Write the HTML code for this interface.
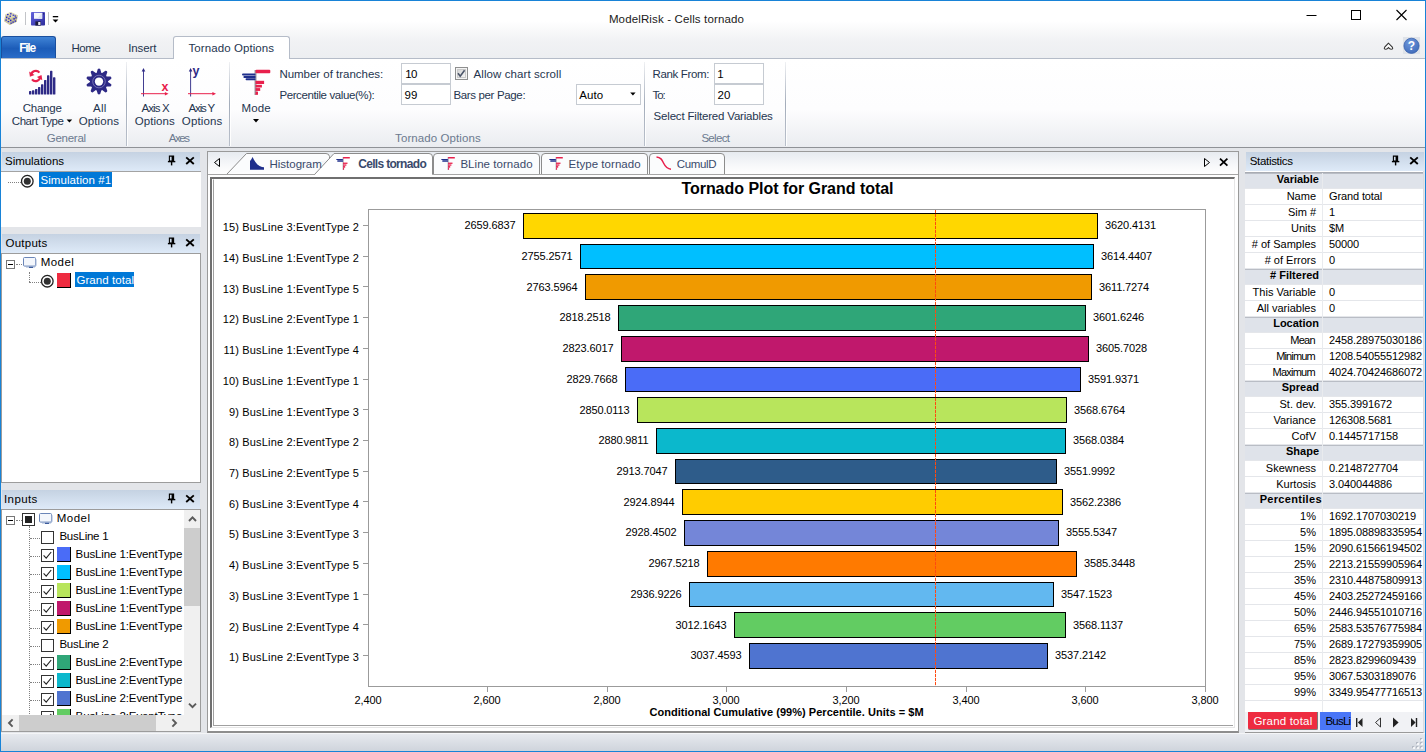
<!DOCTYPE html>
<html><head><meta charset="utf-8"><title>ModelRisk - Cells tornado</title>
<style>
*{box-sizing:border-box;margin:0;padding:0}
html,body{width:1426px;height:752px;overflow:hidden;background:#fff}
body{font-family:"Liberation Sans",sans-serif;font-size:12px;color:#25354f;position:relative}
.a{position:absolute}
.t{position:absolute;white-space:nowrap;line-height:14px}
.ui{font-size:12px;color:#25354f;letter-spacing:0px}
.c{text-align:center}
.gl{color:#6a7c96}
.ch{font-size:11px;color:#000;line-height:14px}
.dg{letter-spacing:-0.12px}
.lb{letter-spacing:0.17px}
.inp{position:absolute;background:#fff;border:1px solid #c6cbd2;height:21px}
.ph{position:absolute;height:19px;background:linear-gradient(#c5d2e2,#deeaf8);}
.ph .t{top:2px;left:5px;color:#000}
.pn{position:absolute;background:#fff;border:1px solid #9c9c9c}
.sel{background:#0078d7;color:#fff}
.cb{position:absolute;width:13px;height:13px;border:1px solid #333;background:#fff}
.sw{position:absolute;width:13px;height:15px;border-right:1px solid #000;border-bottom:1px solid #000}
.dot{position:absolute;border-top:1px dotted #808080;height:0}
.vdot{position:absolute;border-left:1px dotted #808080;width:0}
.st{position:absolute;font-size:11px;color:#000;white-space:nowrap;line-height:14px}
</style></head>
<body>
<div class="a" style="left:0;top:0;width:1426px;height:752px;background:#fff"></div>
<div class="a" style="left:1px;top:1px;width:1424px;height:58px;background:linear-gradient(#ffffff 0,#ffffff 20px,#f1f2f4 40px,#eceef1 58px)"></div>
<div class="a" style="left:1px;top:58px;width:1424px;height:90px;background:linear-gradient(#ffffff 0,#fdfdfe 50px,#eaecf0 89px);border-top:1px solid #b5bcc8;border-bottom:1px solid #8f9297"></div>
<div class="a" style="left:1px;top:148px;width:1424px;height:585px;background:#e3e5e9"></div>
<div class="a" style="left:1px;top:733px;width:1424px;height:18px;background:linear-gradient(#e6e9ee,#cfd4dc);border-top:1px solid #f4f5f7"></div>
<div class="a" style="left:0;top:0;width:1426px;height:752px;border:1px solid #1883d7;pointer-events:none;z-index:50"></div>
<div class="t" style="left:608.90px;top:12px;font-size:11.5px;letter-spacing:0.139px;color:#1a1a1a">ModelRisk - Cells tornado</div>
<svg class="a" style="left:0px;top:8px" width="64" height="22" viewBox="0 8 64 22">
<defs><linearGradient id="fl" x1="0" y1="0" x2="1" y2="1"><stop offset="0" stop-color="#6464dc"/><stop offset="0.6" stop-color="#4040b8"/><stop offset="1" stop-color="#2c2c98"/></linearGradient></defs>
<path d="M10.5 12 L17.6 15.2 L16.8 21.8 L9.6 25 L4 21.2 L5.4 14.6 Z" fill="#cfcaa2"/>
<path d="M10.5 12 L17.6 15.2 L12 18 L5.4 14.6 Z" fill="#dedab6"/>
<path d="M12 18 L17.6 15.2 L16.8 21.8 L9.6 25 Z" fill="#c2bd94"/>
<g fill="#2626c8"><rect x="7" y="14" width="1.6" height="1.2"/><rect x="10" y="13.2" width="1.6" height="1.2"/><rect x="12.6" y="14.6" width="1.6" height="1.2"/><rect x="9.4" y="15.6" width="1.6" height="1.2"/><rect x="14.6" y="15.4" width="1.4" height="1.2"/>
<rect x="6" y="16.6" width="1.4" height="1.6"/><rect x="8.2" y="17.8" width="1.4" height="1.6"/><rect x="5.4" y="19.4" width="1.4" height="1.4"/><rect x="10" y="19.6" width="1.4" height="1.6"/><rect x="7.6" y="21" width="1.6" height="1.2"/>
<rect x="13.4" y="18" width="1.4" height="1.6"/><rect x="15.4" y="17" width="1.2" height="1.6"/><rect x="14.6" y="20.4" width="1.4" height="1.4"/><rect x="12.4" y="21.4" width="1.4" height="1.4"/><rect x="10.4" y="22.6" width="1.4" height="1.2"/></g>
<rect x="25" y="12" width="1" height="13" fill="#c2c4c8"/>
<rect x="31" y="12" width="14" height="13.6" rx="0.8" fill="url(#fl)"/><rect x="34" y="12.8" width="8.2" height="6" fill="#f4f6fc"/><path d="M42.2 12.8 v6 h-5z" fill="#dfe4f4"/><rect x="35.4" y="21.4" width="5.4" height="4.2" fill="#1c1c3a"/><rect x="38.2" y="22" width="2.2" height="3" fill="#e8e8f4"/><rect x="43.2" y="13" width="0.9" height="1.6" fill="#22226a"/>
<rect x="48" y="12" width="1" height="13" fill="#c2c4c8"/>
<rect x="52.8" y="16" width="5.4" height="1.3" fill="#000"/><path d="M52.6 19.5 h5.8 l-2.9 3z" fill="#000"/>
</svg>
<svg class="a" style="left:1290px;top:2px" width="136" height="28" viewBox="0 0 136 28">
<path d="M16.5 13.5 h10" stroke="#000" stroke-width="1"/>
<rect x="61.5" y="8.5" width="9" height="9" fill="none" stroke="#000" stroke-width="1"/>
<path d="M106.5 8 l10 10 M116.5 8 l-10 10" stroke="#000" stroke-width="1.1"/>
</svg>
<svg class="a" style="left:1380px;top:36px" width="44" height="20" viewBox="0 0 44 20">
<path d="M8.5 7.2 l-3.8 4 q-1.2 2 1.2 2 q1.4 0 2.6-1.5 q1.2 1.5 2.6 1.5 q2.4 0 1.2-2z" fill="#fff" stroke="#333" stroke-width="1.1"/>
<rect x="23" y="1" width="17" height="17" fill="#dfe3e9"/>
<defs><radialGradient id="hg" cx="0.4" cy="0.3" r="0.8"><stop offset="0" stop-color="#6f98dc"/><stop offset="1" stop-color="#3c68b8"/></radialGradient></defs><circle cx="31.5" cy="9.8" r="7.6" fill="url(#hg)" stroke="#3a62ac" stroke-width="0.8"/>
<text x="31.5" y="14" font-family="Liberation Sans" font-weight="bold" font-size="12" fill="#fff" text-anchor="middle">?</text>
</svg>
<div class="a" style="left:1px;top:36px;width:55px;height:22px;border-radius:3px 3px 0 0;background:linear-gradient(#3f83d6,#1c5cb8 55%,#2a6cc8);border:1px solid #1a4f9e;border-bottom:none"></div>
<div class="t" style="left:19.20px;top:41px;font-size:12px;font-weight:bold;letter-spacing:-1.266px;color:#fff">File</div>
<div class="t" style="left:71.40px;top:41px;font-size:11.5px;letter-spacing:-0.460px;color:#25354f">Home</div>
<div class="t" style="left:128.20px;top:41px;font-size:11.5px;letter-spacing:-0.113px;color:#25354f">Insert</div>
<div class="a" style="left:173px;top:36px;width:117px;height:23px;border-radius:3px 3px 0 0;background:#fff;border:1px solid #b5bcc8;border-bottom:none"></div>
<div class="t" style="left:188.50px;top:41px;font-size:11.5px;letter-spacing:0.083px;color:#25354f">Tornado Options</div>
<div class="a" style="left:126px;top:62px;width:1px;height:84px;background:linear-gradient(rgba(150,160,176,0.15),#a3acba 50%,rgba(150,160,176,0.6))"></div>
<div class="a" style="left:127px;top:62px;width:1px;height:84px;background:rgba(255,255,255,0.9)"></div>
<div class="a" style="left:229px;top:62px;width:1px;height:84px;background:linear-gradient(rgba(150,160,176,0.15),#a3acba 50%,rgba(150,160,176,0.6))"></div>
<div class="a" style="left:230px;top:62px;width:1px;height:84px;background:rgba(255,255,255,0.9)"></div>
<div class="a" style="left:644px;top:62px;width:1px;height:84px;background:linear-gradient(rgba(150,160,176,0.15),#a3acba 50%,rgba(150,160,176,0.6))"></div>
<div class="a" style="left:645px;top:62px;width:1px;height:84px;background:rgba(255,255,255,0.9)"></div>
<div class="a" style="left:785px;top:62px;width:1px;height:84px;background:linear-gradient(rgba(150,160,176,0.15),#a3acba 50%,rgba(150,160,176,0.6))"></div>
<div class="a" style="left:786px;top:62px;width:1px;height:84px;background:rgba(255,255,255,0.9)"></div>
<svg class="a" style="left:0;top:58px" width="300" height="90" viewBox="0 58 300 90"><rect x="29" y="91.1" width="2.4" height="3.4" rx="0.6" fill="#2e2a86"/><rect x="32" y="90.3" width="2.4" height="4.2" rx="0.6" fill="#2e2a86"/><rect x="35" y="89" width="2.4" height="5.5" rx="0.6" fill="#2e2a86"/><rect x="38" y="87.1" width="2.4" height="7.4" rx="0.6" fill="#2e2a86"/><rect x="41" y="84.2" width="2.4" height="10.3" rx="0.6" fill="#2e2a86"/><rect x="44" y="80" width="2.4" height="14.5" rx="0.6" fill="#2e2a86"/><rect x="47" y="75.3" width="2.4" height="19.2" rx="0.6" fill="#2e2a86"/><rect x="50" y="70.8" width="2.4" height="23.7" rx="0.6" fill="#2e2a86"/><rect x="53" y="77.3" width="2.4" height="17.2" rx="0.6" fill="#2e2a86"/><path d="M31.2 75.2 a4.6 4.6 0 0 1 8.2 -2.6" stroke="#e8204c" stroke-width="2.2" fill="none"/><path d="M29.2 71.6 l0.7 5.2 l4.6 -1.9z" fill="#e8204c"/><path d="M40.2 76.6 a4.6 4.6 0 0 1 -8.2 2.8" stroke="#e8204c" stroke-width="2.2" fill="none"/><path d="M42.3 80.2 l-0.8 -5.2 l-4.6 2z" fill="#e8204c"/><path d="M96.60 72.88 L97.80 69.01 Q99.00 68.05 100.20 69.01 L101.40 72.88 L102.16 73.12 L105.41 70.70 Q106.94 70.63 107.34 72.10 L106.04 75.94 L106.51 76.59 L110.56 76.54 Q111.84 77.38 111.30 78.81 L107.99 81.15 L107.99 81.95 L111.30 84.29 Q111.84 85.72 110.56 86.56 L106.51 86.51 L106.04 87.16 L107.34 91.00 Q106.94 92.47 105.41 92.40 L102.16 89.98 L101.40 90.22 L100.20 94.09 Q99.00 95.05 97.80 94.09 L96.60 90.22 L95.84 89.98 L92.59 92.40 Q91.06 92.47 90.66 91.00 L91.96 87.16 L91.49 86.51 L87.44 86.56 Q86.16 85.72 86.70 84.29 L90.01 81.95 L90.01 81.15 L86.70 78.81 Q86.16 77.38 87.44 76.54 L91.49 76.59 L91.96 75.94 L90.66 72.10 Q91.06 70.63 92.59 70.70 L95.84 73.12 Z" fill="#2e2a86"/><circle cx="99.0" cy="81.55" r="9.0" fill="#2e2a86"/><circle cx="99.0" cy="81.55" r="4.15" fill="#fff"/><circle cx="99.0" cy="81.55" r="6.3" fill="none" stroke="#a9a6d6" stroke-width="0.55"/><path d="M143.5 96.5 V70" stroke="#2e2a86" stroke-width="1" opacity="0.9"/><path d="M143.5 68 l-1.8 3.4 h3.6z" fill="#2e2a86"/><path d="M141 93.7 H166" stroke="#e8204c" stroke-width="1"/><path d="M168.5 93.7 l-3.6 -1.8 v3.6z" fill="#e8204c"/><text x="161.6" y="91" font-family="Liberation Sans" font-weight="bold" font-size="12.5" fill="#e8204c">x</text><path d="M190.6 96.5 V70" stroke="#2e2a86" stroke-width="1" opacity="0.9"/><path d="M190.6 68 l-1.8 3.4 h3.6z" fill="#2e2a86"/><path d="M188 93.7 H213.5" stroke="#e8204c" stroke-width="1"/><path d="M216 93.7 l-3.6 -1.8 v3.6z" fill="#e8204c"/><text x="192.6" y="75.3" font-family="Liberation Sans" font-weight="bold" font-size="12.5" fill="#2e2a86">y</text><rect x="254.5" y="70" width="2" height="25" fill="#4a4a58" opacity="0.55"/><rect x="255.5" y="69.8" width="14.8" height="3.4" rx="1" fill="#e8204c"/><rect x="242" y="73.4" width="13.5" height="2.2" rx="1" fill="#1f2f8c"/><rect x="243.6" y="75.9" width="11.9" height="2.1" fill="#1f2f8c"/><rect x="245.6" y="78.2" width="9.9" height="2" rx="0.8" fill="#1f2f8c"/><rect x="255.5" y="80.8" width="8.6" height="3.2" fill="#e8204c"/><rect x="255.5" y="84.8" width="6.4" height="2.7" fill="#e8204c"/><rect x="255.5" y="88.1" width="4.7" height="2.8" fill="#e8204c"/><rect x="255.5" y="91.6" width="2.5" height="3.2" fill="#e8204c"/><path d="M253 119 h6 l-3 3.4z" fill="#000"/><path d="M66.6 119.4 h5.6 l-2.8 3.2z" fill="#000"/></svg>
<div class="t" style="left:22.70px;top:101px;font-size:11.5px;letter-spacing:-0.238px;color:#25354f">Change</div>
<div class="t" style="left:11.80px;top:114px;font-size:11.5px;letter-spacing:-0.450px;color:#25354f">Chart Type</div>
<div class="t" style="left:93.10px;top:101px;font-size:11.5px;letter-spacing:0.187px;color:#25354f">All</div>
<div class="t" style="left:78.80px;top:114px;font-size:11.5px;letter-spacing:0.086px;color:#25354f">Options</div>
<div class="t" style="left:141.40px;top:101px;font-size:11.5px;letter-spacing:-0.864px;color:#25354f">Axis X</div>
<div class="t" style="left:134.70px;top:114px;font-size:11.5px;letter-spacing:0.086px;color:#25354f">Options</div>
<div class="t" style="left:188.50px;top:101px;font-size:11.5px;letter-spacing:-1.124px;color:#25354f">Axis Y</div>
<div class="t" style="left:181.80px;top:114px;font-size:11.5px;letter-spacing:0.136px;color:#25354f">Options</div>
<div class="t" style="left:241.60px;top:101px;font-size:11.5px;letter-spacing:0.110px;color:#25354f">Mode</div>
<div class="t" style="left:46.80px;top:131px;font-size:11.5px;letter-spacing:-0.276px;color:#6c7a8f">General</div>
<div class="t" style="left:168.80px;top:131px;font-size:11.5px;letter-spacing:-1.472px;color:#6c7a8f">Axes</div>
<div class="t" style="left:395.10px;top:131px;font-size:11.5px;letter-spacing:0.090px;color:#6c7a8f">Tornado Options</div>
<div class="t" style="left:701.40px;top:131px;font-size:11.5px;letter-spacing:-0.693px;color:#6c7a8f">Select</div>
<div class="t" style="left:279.40px;top:67px;font-size:11.5px;letter-spacing:-0.022px;color:#25354f">Number of tranches:</div>
<div class="t" style="left:279.40px;top:88px;font-size:11.5px;letter-spacing:-0.395px;color:#25354f">Percentile value(%):</div>
<div class="inp" style="left:401px;top:63px;width:50px"></div>
<div class="t" style="left:405.20px;top:67px;font-size:11.5px;letter-spacing:-0.596px;color:#000">10</div>
<div class="inp" style="left:401px;top:84px;width:50px"></div>
<div class="t" style="left:404.60px;top:88px;font-size:11.5px;letter-spacing:0.004px;color:#000">99</div>
<div class="a" style="left:455px;top:67px;width:13px;height:13px;border:1px solid #8e8f8f;background:#f4f4f4"></div><div class="a" style="left:457px;top:69px;width:9px;height:9px;border:1px solid #c9c9c9;background:linear-gradient(135deg,#d6d6d6,#f4f4f4)"></div>
<svg class="a" style="left:455px;top:67px" width="13" height="13" viewBox="0 0 13 13"><path d="M3 6.2 l2.2 3 l4.4 -6" stroke="#4a5468" stroke-width="1.6" fill="none"/></svg>
<div class="t" style="left:473.60px;top:67px;font-size:11.5px;letter-spacing:0.081px;color:#25354f">Allow chart scroll</div>
<div class="t" style="left:453.40px;top:88px;font-size:11.5px;letter-spacing:-0.347px;color:#25354f">Bars per Page:</div>
<div class="inp" style="left:576px;top:84px;width:65px"></div>
<div class="t" style="left:579.30px;top:88px;font-size:11.5px;letter-spacing:0.080px;color:#000">Auto</div>
<svg class="a" style="left:629px;top:91px" width="8" height="6" viewBox="0 0 8 6"><path d="M1.2 1.4 h5.4 l-2.7 3.2z" fill="#000"/></svg>
<div class="t" style="left:652.60px;top:67px;font-size:11.5px;letter-spacing:-0.363px;color:#25354f">Rank From:</div>
<div class="t" style="left:652.60px;top:88px;font-size:11.5px;letter-spacing:-1.173px;color:#25354f">To:</div>
<div class="inp" style="left:714px;top:63px;width:50px"></div>
<div class="t" style="left:717.2px;top:67px;color:#000;font-size:11.5px">1</div>
<div class="inp" style="left:714px;top:84px;width:50px"></div>
<div class="t" style="left:717.60px;top:88px;font-size:11.5px;letter-spacing:0.004px;color:#000">20</div>
<div class="t" style="left:653.60px;top:109px;font-size:11.5px;letter-spacing:-0.189px;color:#25354f">Select Filtered Variables</div>
<div class="ph" style="left:2px;top:152px;width:198px"></div>
<div class="t" style="left:5.05px;top:154px;font-size:11.5px;letter-spacing:-0.044px;color:#000">Simulations</div>
<svg class="a" style="left:167px;top:155px" width="10" height="12" viewBox="0 0 10 12"><path d="M2.4 1.1 h4.2 v5 h-4.2z" fill="none" stroke="#000" stroke-width="1.1"/><rect x="4.6" y="1" width="2.4" height="5.2" fill="#000"/><rect x="0.9" y="5.9" width="7.4" height="1.4" fill="#000"/><rect x="3.9" y="7" width="1.4" height="3.4" fill="#000"/></svg>
<svg class="a" style="left:185px;top:156px" width="10" height="10" viewBox="0 0 10 10"><path d="M1.2 1.4 l7.6 6.6 M8.8 1.4 l-7.6 6.6" stroke="#000" stroke-width="1.9" fill="none"/></svg>
<div class="a" style="left:1px;top:171px;width:200px;height:56px;background:#fff;border-top:1px solid #a3a3a3"></div>
<div class="dot" style="left:8px;top:182px;width:13px"></div>
<svg class="a" style="left:20px;top:174px" width="14" height="14" viewBox="0 0 14 14"><circle cx="7.3" cy="7.2" r="5.8" fill="#fff" stroke="#222" stroke-width="1.3"/><circle cx="7.3" cy="7.2" r="3.5" fill="#303030"/></svg>
<div class="a" style="left:39px;top:172px;width:73px;height:15px;background:#0078d7"></div>
<div class="t" style="left:40.40px;top:173px;font-size:11.5px;letter-spacing:0.093px;color:#fff">Simulation #1</div>
<div class="ph" style="left:2px;top:234px;width:198px"></div>
<div class="t" style="left:5.50px;top:236px;font-size:11.5px;letter-spacing:0.246px;color:#000">Outputs</div>
<svg class="a" style="left:167px;top:237px" width="10" height="12" viewBox="0 0 10 12"><path d="M2.4 1.1 h4.2 v5 h-4.2z" fill="none" stroke="#000" stroke-width="1.1"/><rect x="4.6" y="1" width="2.4" height="5.2" fill="#000"/><rect x="0.9" y="5.9" width="7.4" height="1.4" fill="#000"/><rect x="3.9" y="7" width="1.4" height="3.4" fill="#000"/></svg>
<svg class="a" style="left:185px;top:238px" width="10" height="10" viewBox="0 0 10 10"><path d="M1.2 1.4 l7.6 6.6 M8.8 1.4 l-7.6 6.6" stroke="#000" stroke-width="1.9" fill="none"/></svg>
<div class="pn" style="left:1px;top:253px;width:200px;height:230px"></div>
<svg class="a" style="left:6px;top:260px" width="9" height="9" viewBox="0 0 9 9"><rect x="0.5" y="0.5" width="8" height="8" fill="#fff" stroke="#777" stroke-width="1"/><path d="M2 4.5 h5" stroke="#000" stroke-width="1"/></svg>
<div class="dot" style="left:16px;top:264px;width:6px"></div>
<svg class="a" style="left:23px;top:257px" width="14" height="11" viewBox="0 0 14 11"><rect x="0.5" y="0.5" width="12" height="8.6" rx="1" fill="#f4f7fc" stroke="#6b86b8" stroke-width="1"/><path d="M3 9.8 h8.5 l1.4 -1.6 v-6" stroke="#9fb2d4" stroke-width="1.2" fill="none"/><path d="M6 10.4 h4" stroke="#3c5c9c" stroke-width="1.2"/></svg>
<div class="t" style="left:40.80px;top:255px;font-size:11.5px;letter-spacing:0.408px;color:#000">Model</div>
<div class="vdot" style="left:29px;top:272px;height:10px"></div>
<div class="dot" style="left:29px;top:282px;width:12px"></div>
<svg class="a" style="left:40px;top:274px" width="14" height="14" viewBox="0 0 14 14"><circle cx="7.3" cy="7.2" r="5.8" fill="#fff" stroke="#222" stroke-width="1.3"/><circle cx="7.3" cy="7.2" r="3.5" fill="#303030"/></svg>
<div class="a" style="left:57px;top:273px;width:14px;height:15px;background:#ee2b40;border-right:1px solid #000;border-bottom:1px solid #000"></div>
<div class="a" style="left:75px;top:272px;width:59px;height:15px;background:#0078d7"></div>
<div class="t" style="left:76.40px;top:273px;font-size:11.5px;letter-spacing:0.066px;color:#fff">Grand total</div>
<div class="ph" style="left:2px;top:490px;width:198px"></div>
<div class="t" style="left:4.05px;top:492px;font-size:11.5px;letter-spacing:0.375px;color:#000">Inputs</div>
<svg class="a" style="left:167px;top:493px" width="10" height="12" viewBox="0 0 10 12"><path d="M2.4 1.1 h4.2 v5 h-4.2z" fill="none" stroke="#000" stroke-width="1.1"/><rect x="4.6" y="1" width="2.4" height="5.2" fill="#000"/><rect x="0.9" y="5.9" width="7.4" height="1.4" fill="#000"/><rect x="3.9" y="7" width="1.4" height="3.4" fill="#000"/></svg>
<svg class="a" style="left:185px;top:494px" width="10" height="10" viewBox="0 0 10 10"><path d="M1.2 1.4 l7.6 6.6 M8.8 1.4 l-7.6 6.6" stroke="#000" stroke-width="1.9" fill="none"/></svg>
<div class="pn" style="left:1px;top:509px;width:200px;height:223px"></div>
<div class="a" style="left:2px;top:510px;width:182px;height:205px;overflow:hidden">
<svg class="a" style="left:4px;top:6px" width="9" height="9" viewBox="0 0 9 9"><rect x="0.5" y="0.5" width="8" height="8" fill="#fff" stroke="#777" stroke-width="1"/><path d="M2 4.5 h5" stroke="#000" stroke-width="1"/></svg>
<div class="dot" style="left:14px;top:10px;width:6px"></div>
<div class="a" style="left:20px;top:3px;width:13px;height:13px;border:1px solid #333;background:#fff"></div><div class="a" style="left:23px;top:6px;width:7px;height:7px;background:#222"></div>
<svg class="a" style="left:37px;top:3px" width="14" height="11" viewBox="0 0 14 11"><rect x="0.5" y="0.5" width="12" height="8.6" rx="1" fill="#f4f7fc" stroke="#6b86b8" stroke-width="1"/><path d="M3 9.8 h8.5 l1.4 -1.6 v-6" stroke="#9fb2d4" stroke-width="1.2" fill="none"/><path d="M6 10.4 h4" stroke="#3c5c9c" stroke-width="1.2"/></svg>
<div class="t" style="left:54.70px;top:1px;font-size:11.5px;letter-spacing:0.483px;color:#000">Model</div>
<div class="vdot" style="left:27px;top:16px;height:200px"></div>
<div class="dot" style="left:28px;top:28px;width:10px"></div>
<div class="a" style="left:39px;top:21px;width:13px;height:13px;border:1px solid #333;background:#fff"></div>
<div class="t" style="left:57.40px;top:19px;font-size:11.5px;letter-spacing:-0.244px;color:#000">BusLine 1</div>
<div class="dot" style="left:28px;top:46px;width:10px"></div>
<div class="a" style="left:39px;top:39px;width:13px;height:13px;border:1px solid #333;background:#fff"><svg class="a" style="left:0;top:0" width="11" height="11" viewBox="0 0 11 11"><path d="M1.6 5.4 l2.6 2.8 l5 -6.2" stroke="#222" stroke-width="1.1" fill="none"/></svg></div>
<div class="a" style="left:55px;top:37px;width:14px;height:15px;background:#4a6cf7;border-right:1px solid #000;border-bottom:1px solid #000"></div>
<div class="t" style="left:73.60px;top:37px;font-size:11.5px;letter-spacing:-0.110px;color:#000">BusLine 1:EventType</div>
<div class="dot" style="left:28px;top:64px;width:10px"></div>
<div class="a" style="left:39px;top:57px;width:13px;height:13px;border:1px solid #333;background:#fff"><svg class="a" style="left:0;top:0" width="11" height="11" viewBox="0 0 11 11"><path d="M1.6 5.4 l2.6 2.8 l5 -6.2" stroke="#222" stroke-width="1.1" fill="none"/></svg></div>
<div class="a" style="left:55px;top:55px;width:14px;height:15px;background:#00bfff;border-right:1px solid #000;border-bottom:1px solid #000"></div>
<div class="t" style="left:73.60px;top:55px;font-size:11.5px;letter-spacing:-0.110px;color:#000">BusLine 1:EventType</div>
<div class="dot" style="left:28px;top:82px;width:10px"></div>
<div class="a" style="left:39px;top:75px;width:13px;height:13px;border:1px solid #333;background:#fff"><svg class="a" style="left:0;top:0" width="11" height="11" viewBox="0 0 11 11"><path d="M1.6 5.4 l2.6 2.8 l5 -6.2" stroke="#222" stroke-width="1.1" fill="none"/></svg></div>
<div class="a" style="left:55px;top:73px;width:14px;height:15px;background:#b8e55c;border-right:1px solid #000;border-bottom:1px solid #000"></div>
<div class="t" style="left:73.60px;top:73px;font-size:11.5px;letter-spacing:-0.110px;color:#000">BusLine 1:EventType</div>
<div class="dot" style="left:28px;top:100px;width:10px"></div>
<div class="a" style="left:39px;top:93px;width:13px;height:13px;border:1px solid #333;background:#fff"><svg class="a" style="left:0;top:0" width="11" height="11" viewBox="0 0 11 11"><path d="M1.6 5.4 l2.6 2.8 l5 -6.2" stroke="#222" stroke-width="1.1" fill="none"/></svg></div>
<div class="a" style="left:55px;top:91px;width:14px;height:15px;background:#c0186c;border-right:1px solid #000;border-bottom:1px solid #000"></div>
<div class="t" style="left:73.60px;top:91px;font-size:11.5px;letter-spacing:-0.110px;color:#000">BusLine 1:EventType</div>
<div class="dot" style="left:28px;top:118px;width:10px"></div>
<div class="a" style="left:39px;top:111px;width:13px;height:13px;border:1px solid #333;background:#fff"><svg class="a" style="left:0;top:0" width="11" height="11" viewBox="0 0 11 11"><path d="M1.6 5.4 l2.6 2.8 l5 -6.2" stroke="#222" stroke-width="1.1" fill="none"/></svg></div>
<div class="a" style="left:55px;top:109px;width:14px;height:15px;background:#f09a00;border-right:1px solid #000;border-bottom:1px solid #000"></div>
<div class="t" style="left:73.60px;top:109px;font-size:11.5px;letter-spacing:-0.110px;color:#000">BusLine 1:EventType</div>
<div class="dot" style="left:28px;top:136px;width:10px"></div>
<div class="a" style="left:39px;top:129px;width:13px;height:13px;border:1px solid #333;background:#fff"></div>
<div class="t" style="left:57.40px;top:127px;font-size:11.5px;letter-spacing:-0.244px;color:#000">BusLine 2</div>
<div class="dot" style="left:28px;top:154px;width:10px"></div>
<div class="a" style="left:39px;top:147px;width:13px;height:13px;border:1px solid #333;background:#fff"><svg class="a" style="left:0;top:0" width="11" height="11" viewBox="0 0 11 11"><path d="M1.6 5.4 l2.6 2.8 l5 -6.2" stroke="#222" stroke-width="1.1" fill="none"/></svg></div>
<div class="a" style="left:55px;top:145px;width:14px;height:15px;background:#2fa678;border-right:1px solid #000;border-bottom:1px solid #000"></div>
<div class="t" style="left:73.60px;top:145px;font-size:11.5px;letter-spacing:-0.110px;color:#000">BusLine 2:EventType</div>
<div class="dot" style="left:28px;top:172px;width:10px"></div>
<div class="a" style="left:39px;top:165px;width:13px;height:13px;border:1px solid #333;background:#fff"><svg class="a" style="left:0;top:0" width="11" height="11" viewBox="0 0 11 11"><path d="M1.6 5.4 l2.6 2.8 l5 -6.2" stroke="#222" stroke-width="1.1" fill="none"/></svg></div>
<div class="a" style="left:55px;top:163px;width:14px;height:15px;background:#0bb8cc;border-right:1px solid #000;border-bottom:1px solid #000"></div>
<div class="t" style="left:73.60px;top:163px;font-size:11.5px;letter-spacing:-0.110px;color:#000">BusLine 2:EventType</div>
<div class="dot" style="left:28px;top:190px;width:10px"></div>
<div class="a" style="left:39px;top:183px;width:13px;height:13px;border:1px solid #333;background:#fff"><svg class="a" style="left:0;top:0" width="11" height="11" viewBox="0 0 11 11"><path d="M1.6 5.4 l2.6 2.8 l5 -6.2" stroke="#222" stroke-width="1.1" fill="none"/></svg></div>
<div class="a" style="left:55px;top:181px;width:14px;height:15px;background:#4f74d0;border-right:1px solid #000;border-bottom:1px solid #000"></div>
<div class="t" style="left:73.60px;top:181px;font-size:11.5px;letter-spacing:-0.110px;color:#000">BusLine 2:EventType</div>
<div class="dot" style="left:28px;top:208px;width:10px"></div>
<div class="a" style="left:39px;top:201px;width:13px;height:13px;border:1px solid #333;background:#fff"><svg class="a" style="left:0;top:0" width="11" height="11" viewBox="0 0 11 11"><path d="M1.6 5.4 l2.6 2.8 l5 -6.2" stroke="#222" stroke-width="1.1" fill="none"/></svg></div>
<div class="a" style="left:55px;top:199px;width:14px;height:15px;background:#62cc62;border-right:1px solid #000;border-bottom:1px solid #000"></div>
<div class="t" style="left:73.60px;top:199px;font-size:11.5px;letter-spacing:-0.110px;color:#000">BusLine 2:EventType</div>
</div>
<div class="a" style="left:184px;top:510px;width:16px;height:205px;background:#f0f0f0"></div>
<div class="a" style="left:184px;top:528px;width:16px;height:78px;background:#cdcdcd"></div>
<svg class="a" style="left:184.5px;top:510px" width="15" height="205" viewBox="0 0 15 205"><path d="M4 11 l3.5 -3.6 l3.5 3.6" stroke="#5a5a5a" stroke-width="1.9" fill="none"/><path d="M4 193.6 l3.5 3.6 l3.5 -3.6" stroke="#5a5a5a" stroke-width="1.9" fill="none"/></svg>
<div class="a" style="left:2px;top:715px;width:198px;height:16px;background:#f0f0f0"></div>
<div class="a" style="left:19px;top:715px;width:137px;height:16px;background:#cdcdcd"></div>
<svg class="a" style="left:2px;top:715px" width="198" height="16" viewBox="0 0 198 16"><path d="M10.6 4.4 l-3.6 3.6 l3.6 3.6" stroke="#5a5a5a" stroke-width="1.9" fill="none"/><path d="M170.4 4.4 l3.6 3.6 l-3.6 3.6" stroke="#5a5a5a" stroke-width="1.9" fill="none"/></svg>
<div class="a" style="left:207px;top:151px;width:1032px;height:582px;background:#fff;border:1px solid #9a9a9a;border-bottom:2px solid #8d8d8d"></div>
<div class="a" style="left:208px;top:152px;width:1030px;height:22px;background:linear-gradient(#e7ebf0,#f7f8fa 60%,#ffffff)"></div>
<div class="a" style="left:208px;top:174px;width:1030px;height:1px;background:#a6a6a6"></div>
<svg class="a" style="left:208px;top:152px" width="1030" height="24" viewBox="208 152 1030 24"><path d="M227 174 L246.5 153.5 H326 Q329 153.5 329.5 156.5 V160" fill="#fbfcfd" stroke="#8c8c8c" stroke-width="1"/><path d="M433.5 174 V157 Q433.5 153.5 437.0 153.5 H536.0 Q539.5 153.5 539.5 157 V174" fill="#fbfcfd" stroke="#8c8c8c" stroke-width="1"/><path d="M541.5 174 V157 Q541.5 153.5 545.0 153.5 H644.0 Q647.5 153.5 647.5 157 V174" fill="#fbfcfd" stroke="#8c8c8c" stroke-width="1"/><path d="M649.5 174 V157 Q649.5 153.5 653.0 153.5 H721.0 Q724.5 153.5 724.5 157 V174" fill="#fbfcfd" stroke="#8c8c8c" stroke-width="1"/><path d="M314.5 175 L334 153.5 H429 Q432.5 153.5 432.5 157 V175 Z" fill="#fff" stroke="none"/><path d="M314.5 174.5 L334 153.5 H429 Q432.5 153.5 432.5 157 V174.5" fill="none" stroke="#8c8c8c" stroke-width="1"/><path d="M219.5 158.5 v8 l-5 -4z" fill="none" stroke="#000" stroke-width="1"/><path d="M1204.5 158.5 v8 l5 -4z" fill="none" stroke="#000" stroke-width="1"/><path d="M1220 158.6 l7.4 7 M1227.4 158.6 l-7.4 7" stroke="#000" stroke-width="1.8" fill="none"/><path d="M250 169.7 V161 L251.2 159.6 L252.6 157 L253.8 159.6 L255.4 162 L257.4 164.4 L259.6 166 L262 166.9 L264 167.3 V169.7Z" fill="#1f2f8c"/><g transform="translate(336,156)"><rect x="6.6" y="1" width="1.2" height="13" fill="#60607a" opacity="0.5"/><rect x="7" y="0.9" width="6.9" height="1.5" rx="0.5" fill="#e8204c"/><rect x="0.2" y="2.9" width="6.8" height="1.1" rx="0.4" fill="#1f2f8c"/><rect x="1.3" y="4.2" width="5.7" height="1.6" rx="0.4" fill="#1f2f8c"/><rect x="7" y="6.6" width="4.5" height="1.3" fill="#e8204c"/><rect x="7" y="8.4" width="3.4" height="1.3" fill="#e8204c"/><rect x="7" y="10.1" width="2.2" height="1.6" fill="#e8204c"/><rect x="7" y="12.1" width="1.1" height="1.6" fill="#e8204c"/></g><g transform="translate(441,156)"><rect x="6.6" y="1" width="1.2" height="13" fill="#60607a" opacity="0.5"/><rect x="7" y="0.9" width="6.9" height="1.5" rx="0.5" fill="#e8204c"/><rect x="0.2" y="2.9" width="6.8" height="1.1" rx="0.4" fill="#1f2f8c"/><rect x="1.3" y="4.2" width="5.7" height="1.6" rx="0.4" fill="#1f2f8c"/><rect x="7" y="6.6" width="4.5" height="1.3" fill="#e8204c"/><rect x="7" y="8.4" width="3.4" height="1.3" fill="#e8204c"/><rect x="7" y="10.1" width="2.2" height="1.6" fill="#e8204c"/><rect x="7" y="12.1" width="1.1" height="1.6" fill="#e8204c"/></g><g transform="translate(549,156)"><rect x="6.6" y="1" width="1.2" height="13" fill="#60607a" opacity="0.5"/><rect x="7" y="0.9" width="6.9" height="1.5" rx="0.5" fill="#e8204c"/><rect x="0.2" y="2.9" width="6.8" height="1.1" rx="0.4" fill="#1f2f8c"/><rect x="1.3" y="4.2" width="5.7" height="1.6" rx="0.4" fill="#1f2f8c"/><rect x="7" y="6.6" width="4.5" height="1.3" fill="#e8204c"/><rect x="7" y="8.4" width="3.4" height="1.3" fill="#e8204c"/><rect x="7" y="10.1" width="2.2" height="1.6" fill="#e8204c"/><rect x="7" y="12.1" width="1.1" height="1.6" fill="#e8204c"/></g><path d="M656.5 157 C661 157.5 662 160 663.5 163 S667 169 671 169.2" stroke="#e8204c" stroke-width="1.5" fill="none"/></svg>
<div class="t" style="left:269.50px;top:157px;font-size:11.5px;letter-spacing:-0.015px;color:#3a4a6b">Histogram</div>
<div class="t" style="left:358.20px;top:157px;font-size:12px;font-weight:bold;letter-spacing:-0.679px;color:#3a4a6b">Cells tornado</div>
<div class="t" style="left:460.40px;top:157px;font-size:11.5px;letter-spacing:0.049px;color:#3a4a6b">BLine tornado</div>
<div class="t" style="left:568.50px;top:157px;font-size:11.5px;letter-spacing:0.041px;color:#3a4a6b">Etype tornado</div>
<div class="t" style="left:676.70px;top:157px;font-size:11.5px;letter-spacing:-0.326px;color:#3a4a6b">CumulD</div>
<div class="a" style="left:210px;top:177px;width:1025px;height:551px;background:#fff;border-left:2px solid #6f6f6f;border-top:2px solid #6f6f6f;border-right:1px solid #e6e6e6;border-bottom:1px solid #e6e6e6"></div>
<div class="a" style="left:213px;top:179px;width:1020px;height:547px;background:#fff;border-left:1px solid #a0a0a0;border-bottom:1px solid #a0a0a0;border-top:1px solid #fff"></div>
<div class="a" style="left:368px;top:209px;width:838px;height:478px;border:1px solid #9b9b9b"></div>
<div class="t" style="left:681.40px;top:180px;font-size:16px;font-weight:bold;letter-spacing:-0.033px;color:#000;line-height:18px">Tornado Plot for Grand total</div>
<div class="a" style="left:523px;top:213px;width:575px;height:26px;background:#ffd700;border:1px solid #000"></div>
<div class="t ch dg" style="left:435.5px;width:80px;text-align:right;top:218px">2659.6837</div>
<div class="t ch dg" style="left:1105px;top:218px">3620.4131</div>
<div class="t ch lb" style="left:158px;width:201px;text-align:right;top:220px">15) BusLine 3:EventType 2</div>
<div class="a" style="left:363px;top:225px;width:5px;height:1px;background:#9b9b9b"></div>
<div class="a" style="left:580px;top:244px;width:514px;height:25px;background:#00bfff;border:1px solid #000"></div>
<div class="t ch dg" style="left:492.5px;width:80px;text-align:right;top:249px">2755.2571</div>
<div class="t ch dg" style="left:1101px;top:249px">3614.4407</div>
<div class="t ch lb" style="left:158px;width:201px;text-align:right;top:251px">14) BusLine 1:EventType 2</div>
<div class="a" style="left:363px;top:256px;width:5px;height:1px;background:#9b9b9b"></div>
<div class="a" style="left:585px;top:274px;width:507px;height:26px;background:#f09a00;border:1px solid #000"></div>
<div class="t ch dg" style="left:497.5px;width:80px;text-align:right;top:280px">2763.5964</div>
<div class="t ch dg" style="left:1099px;top:280px">3611.7274</div>
<div class="t ch lb" style="left:158px;width:201px;text-align:right;top:282px">13) BusLine 1:EventType 5</div>
<div class="a" style="left:363px;top:286px;width:5px;height:1px;background:#9b9b9b"></div>
<div class="a" style="left:618px;top:305px;width:468px;height:26px;background:#2fa678;border:1px solid #000"></div>
<div class="t ch dg" style="left:530.5px;width:80px;text-align:right;top:310px">2818.2518</div>
<div class="t ch dg" style="left:1093px;top:310px">3601.6246</div>
<div class="t ch lb" style="left:158px;width:201px;text-align:right;top:312px">12) BusLine 2:EventType 1</div>
<div class="a" style="left:363px;top:317px;width:5px;height:1px;background:#9b9b9b"></div>
<div class="a" style="left:621px;top:336px;width:468px;height:26px;background:#c0186c;border:1px solid #000"></div>
<div class="t ch dg" style="left:533.5px;width:80px;text-align:right;top:341px">2823.6017</div>
<div class="t ch dg" style="left:1096px;top:341px">3605.7028</div>
<div class="t ch lb" style="left:158px;width:201px;text-align:right;top:343px">11) BusLine 1:EventType 4</div>
<div class="a" style="left:363px;top:348px;width:5px;height:1px;background:#9b9b9b"></div>
<div class="a" style="left:625px;top:367px;width:456px;height:25px;background:#4a6cf7;border:1px solid #000"></div>
<div class="t ch dg" style="left:537.5px;width:80px;text-align:right;top:372px">2829.7668</div>
<div class="t ch dg" style="left:1088px;top:372px">3591.9371</div>
<div class="t ch lb" style="left:158px;width:201px;text-align:right;top:374px">10) BusLine 1:EventType 1</div>
<div class="a" style="left:363px;top:379px;width:5px;height:1px;background:#9b9b9b"></div>
<div class="a" style="left:637px;top:397px;width:430px;height:26px;background:#b8e55c;border:1px solid #000"></div>
<div class="t ch dg" style="left:549.5px;width:80px;text-align:right;top:403px">2850.0113</div>
<div class="t ch dg" style="left:1074px;top:403px">3568.6764</div>
<div class="t ch lb" style="left:158px;width:201px;text-align:right;top:405px">9) BusLine 1:EventType 3</div>
<div class="a" style="left:363px;top:409px;width:5px;height:1px;background:#9b9b9b"></div>
<div class="a" style="left:656px;top:428px;width:410px;height:26px;background:#0bb8cc;border:1px solid #000"></div>
<div class="t ch dg" style="left:568.5px;width:80px;text-align:right;top:433px">2880.9811</div>
<div class="t ch dg" style="left:1073px;top:433px">3568.0384</div>
<div class="t ch lb" style="left:158px;width:201px;text-align:right;top:435px">8) BusLine 2:EventType 2</div>
<div class="a" style="left:363px;top:440px;width:5px;height:1px;background:#9b9b9b"></div>
<div class="a" style="left:675px;top:459px;width:382px;height:25px;background:#2e5c8a;border:1px solid #000"></div>
<div class="t ch dg" style="left:587.5px;width:80px;text-align:right;top:464px">2913.7047</div>
<div class="t ch dg" style="left:1064px;top:464px">3551.9992</div>
<div class="t ch lb" style="left:158px;width:201px;text-align:right;top:466px">7) BusLine 2:EventType 5</div>
<div class="a" style="left:363px;top:471px;width:5px;height:1px;background:#9b9b9b"></div>
<div class="a" style="left:682px;top:489px;width:381px;height:26px;background:#ffcc00;border:1px solid #000"></div>
<div class="t ch dg" style="left:594.5px;width:80px;text-align:right;top:495px">2924.8944</div>
<div class="t ch dg" style="left:1070px;top:495px">3562.2386</div>
<div class="t ch lb" style="left:158px;width:201px;text-align:right;top:497px">6) BusLine 3:EventType 4</div>
<div class="a" style="left:363px;top:501px;width:5px;height:1px;background:#9b9b9b"></div>
<div class="a" style="left:684px;top:520px;width:375px;height:26px;background:#7486d8;border:1px solid #000"></div>
<div class="t ch dg" style="left:596.5px;width:80px;text-align:right;top:525px">2928.4502</div>
<div class="t ch dg" style="left:1066px;top:525px">3555.5347</div>
<div class="t ch lb" style="left:158px;width:201px;text-align:right;top:527px">5) BusLine 3:EventType 3</div>
<div class="a" style="left:363px;top:532px;width:5px;height:1px;background:#9b9b9b"></div>
<div class="a" style="left:707px;top:551px;width:370px;height:26px;background:#ff7a00;border:1px solid #000"></div>
<div class="t ch dg" style="left:619.5px;width:80px;text-align:right;top:556px">2967.5218</div>
<div class="t ch dg" style="left:1084px;top:556px">3585.3448</div>
<div class="t ch lb" style="left:158px;width:201px;text-align:right;top:558px">4) BusLine 3:EventType 5</div>
<div class="a" style="left:363px;top:563px;width:5px;height:1px;background:#9b9b9b"></div>
<div class="a" style="left:689px;top:582px;width:365px;height:25px;background:#62b8f0;border:1px solid #000"></div>
<div class="t ch dg" style="left:601.5px;width:80px;text-align:right;top:587px">2936.9226</div>
<div class="t ch dg" style="left:1061px;top:587px">3547.1523</div>
<div class="t ch lb" style="left:158px;width:201px;text-align:right;top:589px">3) BusLine 3:EventType 1</div>
<div class="a" style="left:363px;top:594px;width:5px;height:1px;background:#9b9b9b"></div>
<div class="a" style="left:734px;top:612px;width:332px;height:26px;background:#62cc62;border:1px solid #000"></div>
<div class="t ch dg" style="left:646.5px;width:80px;text-align:right;top:618px">3012.1643</div>
<div class="t ch dg" style="left:1073px;top:618px">3568.1137</div>
<div class="t ch lb" style="left:158px;width:201px;text-align:right;top:620px">2) BusLine 2:EventType 4</div>
<div class="a" style="left:363px;top:624px;width:5px;height:1px;background:#9b9b9b"></div>
<div class="a" style="left:749px;top:643px;width:299px;height:26px;background:#4f74d0;border:1px solid #000"></div>
<div class="t ch dg" style="left:661.5px;width:80px;text-align:right;top:648px">3037.4593</div>
<div class="t ch dg" style="left:1055px;top:648px">3537.2142</div>
<div class="t ch lb" style="left:158px;width:201px;text-align:right;top:650px">1) BusLine 2:EventType 3</div>
<div class="a" style="left:363px;top:655px;width:5px;height:1px;background:#9b9b9b"></div>
<div class="t ch dg" style="left:338px;width:60px;text-align:center;top:693px">2,400</div>
<div class="a" style="left:487px;top:687px;width:1px;height:5px;background:#9b9b9b"></div>
<div class="t ch dg" style="left:457px;width:60px;text-align:center;top:693px">2,600</div>
<div class="a" style="left:607px;top:687px;width:1px;height:5px;background:#9b9b9b"></div>
<div class="t ch dg" style="left:577px;width:60px;text-align:center;top:693px">2,800</div>
<div class="a" style="left:726px;top:687px;width:1px;height:5px;background:#9b9b9b"></div>
<div class="t ch dg" style="left:696px;width:60px;text-align:center;top:693px">3,000</div>
<div class="a" style="left:846px;top:687px;width:1px;height:5px;background:#9b9b9b"></div>
<div class="t ch dg" style="left:816px;width:60px;text-align:center;top:693px">3,200</div>
<div class="a" style="left:966px;top:687px;width:1px;height:5px;background:#9b9b9b"></div>
<div class="t ch dg" style="left:936px;width:60px;text-align:center;top:693px">3,400</div>
<div class="a" style="left:1085px;top:687px;width:1px;height:5px;background:#9b9b9b"></div>
<div class="t ch dg" style="left:1055px;width:60px;text-align:center;top:693px">3,600</div>
<div class="a" style="left:1205px;top:687px;width:1px;height:5px;background:#9b9b9b"></div>
<div class="t ch dg" style="left:1175px;width:60px;text-align:center;top:693px">3,800</div>
<div class="t" style="left:649.50px;top:705px;font-size:11px;font-weight:bold;letter-spacing:0.035px;color:#000">Conditional Cumulative (99%) Percentile. Units = $M</div>
<div class="a" style="left:935px;top:210px;width:1px;height:476px;background:repeating-linear-gradient(#ff4a10 0,#ff4a10 3px,rgba(255,74,16,0.15) 3px,rgba(255,74,16,0.15) 4px)"></div>
<div class="ph" style="left:1246px;top:152px;width:178px"></div>
<div class="t" style="left:1249.70px;top:154px;font-size:11.5px;letter-spacing:-0.307px;color:#000">Statistics</div>
<svg class="a" style="left:1391px;top:155px" width="10" height="12" viewBox="0 0 10 12"><path d="M2.4 1.1 h4.2 v5 h-4.2z" fill="none" stroke="#000" stroke-width="1.1"/><rect x="4.6" y="1" width="2.4" height="5.2" fill="#000"/><rect x="0.9" y="5.9" width="7.4" height="1.4" fill="#000"/><rect x="3.9" y="7" width="1.4" height="3.4" fill="#000"/></svg>
<svg class="a" style="left:1409px;top:156px" width="10" height="10" viewBox="0 0 10 10"><path d="M1.2 1.4 l7.6 6.6 M8.8 1.4 l-7.6 6.6" stroke="#000" stroke-width="1.9" fill="none"/></svg>
<div class="a" style="left:1245px;top:171px;width:179px;height:562px;background:#fff;border-right:1px solid #d9dce1;border-bottom:1px solid #9a9a9a"></div>
<div class="a" style="left:1245px;top:172px;width:178px;height:1px;background:#a9acb3"></div>
<div class="a" style="left:1245px;top:173px;width:178px;height:15px;background:#dfe3ea"></div>
<div class="a" style="left:1245px;top:173px;width:178px;height:1px;background:#b9bdc5"></div>
<div class="st" style="left:1245px;width:74px;text-align:right;top:172px;font-weight:bold">Variable</div>
<div class="a" style="left:1245px;top:188px;width:178px;height:1px;background:#e4e6ea"></div>
<div class="st" style="left:1245px;width:71px;text-align:right;top:189px">Name</div>
<div class="st dg" style="left:1329px;top:189px">Grand total</div>
<div class="a" style="left:1245px;top:204px;width:178px;height:1px;background:#e4e6ea"></div>
<div class="st" style="left:1245px;width:71px;text-align:right;top:205px">Sim #</div>
<div class="st dg" style="left:1329px;top:205px">1</div>
<div class="a" style="left:1245px;top:220px;width:178px;height:1px;background:#e4e6ea"></div>
<div class="st" style="left:1245px;width:71px;text-align:right;top:221px">Units</div>
<div class="st dg" style="left:1329px;top:221px">$M</div>
<div class="a" style="left:1245px;top:236px;width:178px;height:1px;background:#e4e6ea"></div>
<div class="st" style="left:1245px;width:71px;text-align:right;top:237px"># of Samples</div>
<div class="st dg" style="left:1329px;top:237px">50000</div>
<div class="a" style="left:1245px;top:252px;width:178px;height:1px;background:#e4e6ea"></div>
<div class="st" style="left:1245px;width:71px;text-align:right;top:253px"># of Errors</div>
<div class="st dg" style="left:1329px;top:253px">0</div>
<div class="a" style="left:1245px;top:268px;width:178px;height:1px;background:#e4e6ea"></div>
<div class="a" style="left:1245px;top:269px;width:178px;height:15px;background:#dfe3ea"></div>
<div class="a" style="left:1245px;top:269px;width:178px;height:1px;background:#b9bdc5"></div>
<div class="st" style="left:1245px;width:74px;text-align:right;top:268px;font-weight:bold"># Filtered</div>
<div class="a" style="left:1245px;top:284px;width:178px;height:1px;background:#e4e6ea"></div>
<div class="st" style="left:1245px;width:71px;text-align:right;top:285px">This Variable</div>
<div class="st dg" style="left:1329px;top:285px">0</div>
<div class="a" style="left:1245px;top:300px;width:178px;height:1px;background:#e4e6ea"></div>
<div class="st" style="left:1245px;width:71px;text-align:right;top:301px">All variables</div>
<div class="st dg" style="left:1329px;top:301px">0</div>
<div class="a" style="left:1245px;top:316px;width:178px;height:1px;background:#e4e6ea"></div>
<div class="a" style="left:1245px;top:317px;width:178px;height:15px;background:#dfe3ea"></div>
<div class="a" style="left:1245px;top:317px;width:178px;height:1px;background:#b9bdc5"></div>
<div class="st" style="left:1245px;width:74px;text-align:right;top:316px;font-weight:bold">Location</div>
<div class="a" style="left:1245px;top:332px;width:178px;height:1px;background:#e4e6ea"></div>
<div class="t" style="left:1290.30px;top:333px;font-size:11px;letter-spacing:-0.766px;color:#000">Mean</div>
<div class="st dg" style="left:1329px;top:333px">2458.28975030186</div>
<div class="a" style="left:1245px;top:348px;width:178px;height:1px;background:#e4e6ea"></div>
<div class="t" style="left:1276.30px;top:349px;font-size:11px;letter-spacing:-0.892px;color:#000">Minimum</div>
<div class="st dg" style="left:1329px;top:349px">1208.54055512982</div>
<div class="a" style="left:1245px;top:364px;width:178px;height:1px;background:#e4e6ea"></div>
<div class="t" style="left:1272.60px;top:365px;font-size:11px;letter-spacing:-0.784px;color:#000">Maximum</div>
<div class="st dg" style="left:1329px;top:365px">4024.70424686072</div>
<div class="a" style="left:1245px;top:380px;width:178px;height:1px;background:#e4e6ea"></div>
<div class="a" style="left:1245px;top:381px;width:178px;height:15px;background:#dfe3ea"></div>
<div class="a" style="left:1245px;top:381px;width:178px;height:1px;background:#b9bdc5"></div>
<div class="st" style="left:1245px;width:74px;text-align:right;top:380px;font-weight:bold">Spread</div>
<div class="a" style="left:1245px;top:396px;width:178px;height:1px;background:#e4e6ea"></div>
<div class="st" style="left:1245px;width:71px;text-align:right;top:397px">St. dev.</div>
<div class="st dg" style="left:1329px;top:397px">355.3991672</div>
<div class="a" style="left:1245px;top:412px;width:178px;height:1px;background:#e4e6ea"></div>
<div class="st" style="left:1245px;width:71px;text-align:right;top:413px">Variance</div>
<div class="st dg" style="left:1329px;top:413px">126308.5681</div>
<div class="a" style="left:1245px;top:428px;width:178px;height:1px;background:#e4e6ea"></div>
<div class="st" style="left:1245px;width:71px;text-align:right;top:429px">CofV</div>
<div class="st dg" style="left:1329px;top:429px">0.1445717158</div>
<div class="a" style="left:1245px;top:444px;width:178px;height:1px;background:#e4e6ea"></div>
<div class="a" style="left:1245px;top:445px;width:178px;height:15px;background:#dfe3ea"></div>
<div class="a" style="left:1245px;top:445px;width:178px;height:1px;background:#b9bdc5"></div>
<div class="st" style="left:1245px;width:74px;text-align:right;top:444px;font-weight:bold">Shape</div>
<div class="a" style="left:1245px;top:460px;width:178px;height:1px;background:#e4e6ea"></div>
<div class="st" style="left:1245px;width:71px;text-align:right;top:461px">Skewness</div>
<div class="st dg" style="left:1329px;top:461px">0.2148727704</div>
<div class="a" style="left:1245px;top:476px;width:178px;height:1px;background:#e4e6ea"></div>
<div class="st" style="left:1245px;width:71px;text-align:right;top:477px">Kurtosis</div>
<div class="st dg" style="left:1329px;top:477px">3.040044886</div>
<div class="a" style="left:1245px;top:492px;width:178px;height:1px;background:#e4e6ea"></div>
<div class="a" style="left:1245px;top:493px;width:178px;height:15px;background:#dfe3ea"></div>
<div class="a" style="left:1245px;top:493px;width:178px;height:1px;background:#b9bdc5"></div>
<div class="t" style="left:1259.70px;top:492px;font-size:11px;font-weight:bold;letter-spacing:0.312px;color:#000">Percentiles</div>
<div class="a" style="left:1245px;top:508px;width:178px;height:1px;background:#e4e6ea"></div>
<div class="st" style="left:1245px;width:71px;text-align:right;top:509px">1%</div>
<div class="st dg" style="left:1329px;top:509px">1692.1707030219</div>
<div class="a" style="left:1245px;top:524px;width:178px;height:1px;background:#e4e6ea"></div>
<div class="st" style="left:1245px;width:71px;text-align:right;top:525px">5%</div>
<div class="st dg" style="left:1329px;top:525px">1895.08898335954</div>
<div class="a" style="left:1245px;top:540px;width:178px;height:1px;background:#e4e6ea"></div>
<div class="st" style="left:1245px;width:71px;text-align:right;top:541px">15%</div>
<div class="st dg" style="left:1329px;top:541px">2090.61566194502</div>
<div class="a" style="left:1245px;top:556px;width:178px;height:1px;background:#e4e6ea"></div>
<div class="st" style="left:1245px;width:71px;text-align:right;top:557px">25%</div>
<div class="st dg" style="left:1329px;top:557px">2213.21559905964</div>
<div class="a" style="left:1245px;top:572px;width:178px;height:1px;background:#e4e6ea"></div>
<div class="st" style="left:1245px;width:71px;text-align:right;top:573px">35%</div>
<div class="st dg" style="left:1329px;top:573px">2310.44875809913</div>
<div class="a" style="left:1245px;top:588px;width:178px;height:1px;background:#e4e6ea"></div>
<div class="st" style="left:1245px;width:71px;text-align:right;top:589px">45%</div>
<div class="st dg" style="left:1329px;top:589px">2403.25272459166</div>
<div class="a" style="left:1245px;top:604px;width:178px;height:1px;background:#e4e6ea"></div>
<div class="st" style="left:1245px;width:71px;text-align:right;top:605px">50%</div>
<div class="st dg" style="left:1329px;top:605px">2446.94551010716</div>
<div class="a" style="left:1245px;top:620px;width:178px;height:1px;background:#e4e6ea"></div>
<div class="st" style="left:1245px;width:71px;text-align:right;top:621px">65%</div>
<div class="st dg" style="left:1329px;top:621px">2583.53576775984</div>
<div class="a" style="left:1245px;top:636px;width:178px;height:1px;background:#e4e6ea"></div>
<div class="st" style="left:1245px;width:71px;text-align:right;top:637px">75%</div>
<div class="st dg" style="left:1329px;top:637px">2689.17279359905</div>
<div class="a" style="left:1245px;top:652px;width:178px;height:1px;background:#e4e6ea"></div>
<div class="st" style="left:1245px;width:71px;text-align:right;top:653px">85%</div>
<div class="st dg" style="left:1329px;top:653px">2823.8299609439</div>
<div class="a" style="left:1245px;top:668px;width:178px;height:1px;background:#e4e6ea"></div>
<div class="st" style="left:1245px;width:71px;text-align:right;top:669px">95%</div>
<div class="st dg" style="left:1329px;top:669px">3067.5303189076</div>
<div class="a" style="left:1245px;top:684px;width:178px;height:1px;background:#e4e6ea"></div>
<div class="st" style="left:1245px;width:71px;text-align:right;top:685px">99%</div>
<div class="st dg" style="left:1329px;top:685px">3349.95477716513</div>
<div class="a" style="left:1245px;top:700px;width:178px;height:1px;background:#e4e6ea"></div>
<div class="a" style="left:1322px;top:173px;width:1px;height:539px;background:#e9ebee"></div>
<div class="a" style="left:1245px;top:712px;width:178px;height:20px;background:#f1f2f5"></div>
<div class="a" style="left:1248px;top:712px;width:70px;height:18px;background:#ee2b40;border-right:1px solid #7a7a7a;border-bottom:1px solid #7a7a7a;border-radius:0 0 2px 2px"></div>
<div class="t" style="left:1253.40px;top:714px;font-size:11.5px;letter-spacing:0.196px;color:#fff">Grand total</div>
<div class="a" style="left:1320px;top:712px;width:31px;height:18px;background:#4a76f7;overflow:hidden"><div class="t" style="left:5.40px;top:2px;font-size:11.5px;letter-spacing:-0.753px;color:#000">BusLi</div></div>
<svg class="a" style="left:1352px;top:715px" width="70" height="14" viewBox="1352 715 70 14">
<rect x="1356" y="718" width="1.4" height="9" fill="#222"/><path d="M1362.5 718 v9 l-4.6 -4.5z" fill="#222"/>
<path d="M1380.5 718 v9 l-5 -4.5z" fill="none" stroke="#333" stroke-width="1"/>
<path d="M1393 717.5 v10 l5.6 -5z" fill="#222"/>
<path d="M1411 718 v9 l4.6 -4.5z" fill="#222"/><rect x="1415.8" y="718" width="1.4" height="9" fill="#222"/>
</svg>
<svg class="a" style="left:1410px;top:737px" width="14" height="13" viewBox="0 0 14 13"><rect x="10" y="1" width="2" height="2" fill="#b4bac4"/><rect x="11" y="2" width="2" height="2" fill="#fff" opacity="0.8"/><rect x="6" y="5" width="2" height="2" fill="#b4bac4"/><rect x="7" y="6" width="2" height="2" fill="#fff" opacity="0.8"/><rect x="10" y="5" width="2" height="2" fill="#b4bac4"/><rect x="11" y="6" width="2" height="2" fill="#fff" opacity="0.8"/><rect x="2" y="9" width="2" height="2" fill="#b4bac4"/><rect x="3" y="10" width="2" height="2" fill="#fff" opacity="0.8"/><rect x="6" y="9" width="2" height="2" fill="#b4bac4"/><rect x="7" y="10" width="2" height="2" fill="#fff" opacity="0.8"/><rect x="10" y="9" width="2" height="2" fill="#b4bac4"/><rect x="11" y="10" width="2" height="2" fill="#fff" opacity="0.8"/></svg>
</body></html>
